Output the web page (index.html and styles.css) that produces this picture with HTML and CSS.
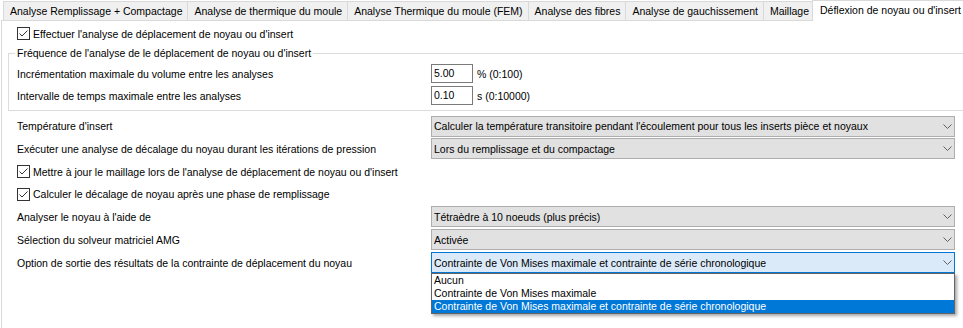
FILE: index.html
```html
<!DOCTYPE html>
<html lang="fr">
<head>
<meta charset="utf-8">
<title>Déflexion de noyau ou d'insert</title>
<link rel="stylesheet" href="styles.css">
</head>
<body>
<div class="tabs">
  <div class="tab">Analyse Remplissage + Compactage</div>
  <div class="tab">Analyse de thermique du moule</div>
  <div class="tab">Analyse Thermique du moule (FEM)</div>
  <div class="tab">Analyse des fibres</div>
  <div class="tab">Analyse de gauchissement</div>
  <div class="tab">Maillage</div>
  <div class="tab active">Déflexion de noyau ou d'insert</div>
</div>
<div class="panel">
  <div class="check-row first">
    <svg class="cb" width="13" height="13" viewBox="0 0 13 13"><rect x="0.5" y="0.5" width="12" height="12" fill="#fff" stroke="#333"/><polyline points="2.5,6.5 5,9 10.5,3.5" fill="none" stroke="#333" stroke-width="1"/></svg>
    <span>Effectuer l'analyse de déplacement de noyau ou d'insert</span>
  </div>
  <div class="group">
    <div class="group-title">Fréquence de l'analyse de le déplacement de noyau ou d'insert</div>
    <div class="field-row r1">
      <span>Incrémentation maximale du volume entre les analyses</span>
      <span class="input">5.00</span>
      <span class="unit">% (0:100)</span>
    </div>
    <div class="field-row r2">
      <span>Intervalle de temps maximale entre les analyses</span>
      <span class="input">0.10</span>
      <span class="unit">s (0:10000)</span>
    </div>
  </div>
  <div class="form">
    <span class="label">Température d'insert</span>
    <div class="combo"><span>Calculer la température transitoire pendant l'écoulement pour tous les inserts pièce et noyaux</span><svg width="9" height="5" viewBox="0 0 9 5"><polyline points="0.5,0.5 4.5,4.5 8.5,0.5" fill="none" stroke="#606060"/></svg></div>

    <span class="label">Exécuter une analyse de décalage du noyau durant les itérations de pression</span>
    <div class="combo"><span>Lors du remplissage et du compactage</span><svg width="9" height="5" viewBox="0 0 9 5"><polyline points="0.5,0.5 4.5,4.5 8.5,0.5" fill="none" stroke="#606060"/></svg></div>

    <div class="check-row span">
      <svg class="cb" width="13" height="13" viewBox="0 0 13 13"><rect x="0.5" y="0.5" width="12" height="12" fill="#fff" stroke="#333"/><polyline points="2.5,6.5 5,9 10.5,3.5" fill="none" stroke="#333" stroke-width="1"/></svg>
      <span>Mettre à jour le maillage lors de l'analyse de déplacement de noyau ou d'insert</span>
    </div>
    <div class="check-row span">
      <svg class="cb" width="13" height="13" viewBox="0 0 13 13"><rect x="0.5" y="0.5" width="12" height="12" fill="#fff" stroke="#333"/><polyline points="2.5,6.5 5,9 10.5,3.5" fill="none" stroke="#333" stroke-width="1"/></svg>
      <span>Calculer le décalage de noyau après une phase de remplissage</span>
    </div>

    <span class="label">Analyser le noyau à l'aide de</span>
    <div class="combo"><span>Tétraèdre à 10 noeuds (plus précis)</span><svg width="9" height="5" viewBox="0 0 9 5"><polyline points="0.5,0.5 4.5,4.5 8.5,0.5" fill="none" stroke="#606060"/></svg></div>

    <span class="label">Sélection du solveur matriciel AMG</span>
    <div class="combo"><span>Activée</span><svg width="9" height="5" viewBox="0 0 9 5"><polyline points="0.5,0.5 4.5,4.5 8.5,0.5" fill="none" stroke="#606060"/></svg></div>

    <span class="label">Option de sortie des résultats de la contrainte de déplacement du noyau</span>
    <div class="combo open"><span>Contrainte de Von Mises maximale et contrainte de série chronologique</span><svg width="9" height="5" viewBox="0 0 9 5"><polyline points="0.5,0.5 4.5,4.5 8.5,0.5" fill="none" stroke="#606060"/></svg>
      <div class="dropdown">
        <div class="item">Aucun</div>
        <div class="item">Contrainte de Von Mises maximale</div>
        <div class="item selected">Contrainte de Von Mises maximale et contrainte de série chronologique</div>
      </div>
    </div>
  </div>
</div>
</body>
</html>
```

FILE: styles.css
```css
html, body {
  margin: 0;
  background: #fff;
}
body {
  font-family: "Liberation Sans", Arial, sans-serif;
  font-size: 10.5px;
  color: #000;
  width: 963px;
  height: 328px;
  overflow: hidden;
}

.tabs {
  display: flex;
  align-items: flex-end;
  height: 20px;
  padding-left: 3px;
}
.tab {
  height: 18px;
  line-height: 18px;
  padding: 0 5px 0 6px;
  background: #f0f0f0;
  border: 1px solid #d9d9d9;
  border-bottom: none;
  margin-right: -1px;
  white-space: nowrap;
}
.tab.active {
  height: 20px;
  line-height: 18px;
  background: #fff;
  margin-left: -2px;
  margin-bottom: -1px;
  padding: 0 4px 0 7px;
  position: relative;
  z-index: 1;
}

.panel {
  border-top: 1px solid #d9d9d9;
  border-left: 1px solid #d9d9d9;
  margin-left: 1px;
  padding: 3px 0 0 15px;
  height: 320px;
}

.check-row {
  display: flex;
  align-items: center;
  gap: 3px;
  height: 19px;
  white-space: nowrap;
}
.cb {
  flex: none;
  display: block;
}
.check-row.span {
  grid-column: 1 / 3;
  height: auto;
}

.group {
  margin: 10px 0 0 -9px;
  border: 1px solid #dcdcdc;
  border-right: none;
  padding: 0 0 4px 8px;
}
.group-title {
  width: fit-content;
  margin: -7px 0 0 -2px;
  padding: 0 2px;
  background: #fff;
  height: 13px;
  line-height: 13px;
  white-space: nowrap;
}
.field-row {
  display: grid;
  grid-template-columns: 414px 42px auto;
  align-items: center;
  height: 21px;
  white-space: nowrap;
}
.field-row.r1 { margin-top: 3px; }
.field-row.r2 { margin-top: 1px; }
.input {
  box-sizing: border-box;
  height: 19px;
  line-height: 17px;
  border: 1px solid #7a7a7a;
  padding-left: 2px;
  background: #fff;
}
.unit {
  margin-left: 4px;
}

.form {
  margin-top: 4px;
  display: grid;
  grid-template-columns: 414px 524px;
  grid-template-rows: 22px 23px 23px 22px 23px 23px 23px;
  align-items: center;
  white-space: nowrap;
}
.combo {
  position: relative;
  box-sizing: border-box;
  height: 21px;
  border: 1px solid #adadad;
  background: #e1e1e1;
  display: flex;
  align-items: center;
  justify-content: space-between;
  padding: 0 2px 0 2px;
}
.combo svg {
  display: block;
  flex: none;
}
.combo.open {
  background: #dbeaf8;
  border-color: #0078d7;
}
.dropdown {
  position: absolute;
  left: -1px;
  right: -1px;
  top: calc(100% + 1px);
  border: 1px solid #646464;
  background: #fff;
  box-shadow: 2px 2px 3px rgba(0, 0, 0, 0.35);
  z-index: 2;
}
.item {
  height: 13px;
  line-height: 13px;
  padding-left: 2px;
}
.item.selected {
  background: #0078d7;
  color: #fff;
}
```
